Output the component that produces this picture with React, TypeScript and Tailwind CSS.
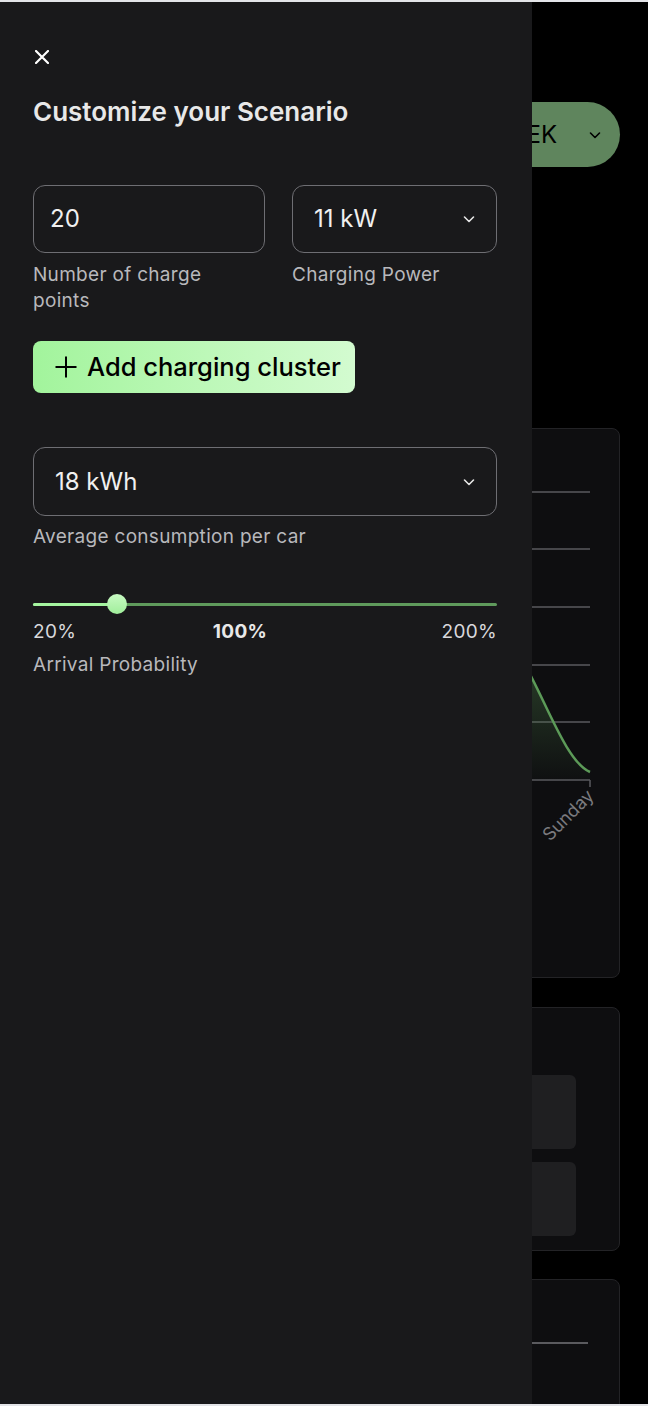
import React from "react";

function Chevron({ className = "" }: { className?: string }) {
  return (
    <svg className={className} width="16" height="16" viewBox="0 0 16 16" fill="none">
      <path d="M3.5 6l4.5 4.5L12.5 6" stroke="currentColor" strokeWidth="1.6" strokeLinecap="round" strokeLinejoin="round" />
    </svg>
  );
}

function Background() {
  const lines = [63, 120, 178, 236, 293, 351];
  return (
    <div className="flex flex-col px-[28px] pt-[100px]">
      <div className="flex justify-end">
        <div className="flex h-[65px] w-[220px] items-center justify-end rounded-full bg-[#5f855d] pr-[17px] text-[24px] text-black">
          <span>THIS WEEK</span>
          <Chevron className="ml-[30px] text-black" />
        </div>
      </div>
      <div className="mt-[261px] h-[550px] rounded-lg border border-[#232326] bg-[#0e0e10]">
        <svg width="592" height="550" viewBox="0 0 592 550">
          <defs>
            <linearGradient id="area" x1="0" y1="0" x2="0" y2="1">
              <stop offset="0" stopColor="#4b7a48" stopOpacity="0.55" />
              <stop offset="1" stopColor="#4b7a48" stopOpacity="0.02" />
            </linearGradient>
          </defs>
          {lines.map((y) => (
            <line key={y} x1="20" x2="561" y1={y} y2={y} stroke="#5a5a5e" strokeWidth="1.5" />
          ))}
          <line x1="561" x2="561" y1="351" y2="358" stroke="#5a5a5e" strokeWidth="1.5" />
          <path d="M470 200 C 505 230, 530 330, 561 343 L561 351 L470 351 Z" fill="url(#area)" />
          <path d="M470 200 C 505 230, 530 330, 561 343" stroke="#5c9a58" strokeWidth="2.5" fill="none" />
          <text
            x="566"
            y="368"
            textAnchor="end"
            transform="rotate(-45 566 368)"
            fill="#7a7a7e"
            fontSize="18"
            fontFamily="Inter, sans-serif"
          >
            Sunday
          </text>
        </svg>
      </div>
      <div className="mt-[29px] flex h-[244px] flex-col items-end gap-[13px] rounded-lg border border-[#232326] bg-[#0e0e10] pr-[43px] pt-[67px]">
        <div className="h-[74px] w-[120px] rounded-md bg-[#1f1f21]" />
        <div className="h-[74px] w-[120px] rounded-md bg-[#1f1f21]" />
      </div>
      <div className="mt-[28px] h-[200px] rounded-lg border border-[#232326] bg-[#0e0e10] pt-[62px] pr-[31px]">
        <div className="ml-auto h-[1.5px] w-[400px] bg-[#5a5a5e]" />
      </div>
    </div>
  );
}

function Drawer() {
  return (
    <div className="absolute bottom-0 left-0 top-0 w-[532px] bg-[#19191b] pl-[33px] pr-[35px] text-[#e6e6e6]">
      <div className="pl-[2px] pt-[48px]">
        <svg width="14" height="14" viewBox="0 0 14 14" fill="none">
          <path d="M1 1L13 13M13 1L1 13" stroke="#ffffff" strokeWidth="2.2" strokeLinecap="round" />
        </svg>
      </div>
      <h1 className="mt-[31px] text-[26px] font-semibold leading-[34px] text-[#e8e8e8]">Customize your Scenario</h1>

      <div className="mt-[56px] flex gap-[27px]">
        <div className="flex w-[232px] flex-col">
          <div className="flex h-[68px] items-center rounded-xl border border-[#6e6e73] px-[16px] text-[24px] text-[#f0f0f0]">
            20
          </div>
          <div className="mt-[9px] w-[200px] text-[19px] leading-[26px] tracking-[0.3px] text-[#b8b8bc]">Number of charge points</div>
        </div>
        <div className="flex w-[205px] flex-col">
          <div className="flex h-[68px] items-center justify-between rounded-xl border border-[#6e6e73] pl-[21px] pr-[19px] text-[24px] text-[#f0f0f0]">
            <span>11 kW</span>
            <Chevron className="text-[#e6e6e6]" />
          </div>
          <div className="mt-[9px] text-[19px] leading-[26px] tracking-[0.3px] text-[#b8b8bc]">Charging Power</div>
        </div>
      </div>

      <button className="mt-[27px] flex h-[52px] w-[322px] items-center gap-[9px] rounded-lg bg-gradient-to-r from-[#a2f49c] to-[#d3fbd0] pl-[21px] text-[25.5px] font-medium text-black">
        <svg width="24" height="24" viewBox="0 0 24 24" fill="none">
          <path d="M12 1.5V22.5M1.5 12H22.5" stroke="#000" strokeWidth="2" />
        </svg>
        <span>Add charging cluster</span>
      </button>

      <div className="mt-[54px] flex h-[69px] items-center justify-between rounded-xl border border-[#6e6e73] pl-[21px] pr-[19px] text-[24px] text-[#f0f0f0]">
        <span>18 kWh</span>
        <Chevron className="text-[#e6e6e6]" />
      </div>
      <div className="mt-[8px] text-[19px] leading-[26px] tracking-[0.3px] text-[#b8b8bc]">Average consumption per car</div>

      <div className="relative mt-[44px] h-[20px]">
        <div className="absolute left-0 right-0 top-[8.5px] h-[3px] rounded-full bg-[#5f9a5c]" />
        <div className="absolute left-0 top-[8.5px] h-[3px] w-[84px] rounded-full bg-[#a5f5a0]" />
        <div className="absolute left-[74px] top-0 h-[20px] w-[20px] rounded-full bg-gradient-to-b from-[#c7fac2] to-[#a0ee9b]" />
      </div>
      <div className="relative mt-[5px] flex justify-between text-[19px] leading-[26px] tracking-[0.3px] text-[#d8d8dc]">
        <span>20%</span>
        <span className="absolute left-[44.6%] top-0 -translate-x-1/2 font-bold text-[#e8e8e8]">100%</span>
        <span>200%</span>
      </div>
      <div className="mt-[7px] text-[19px] leading-[26px] tracking-[0.3px] text-[#b8b8bc]">Arrival Probability</div>
    </div>
  );
}

export default function App() {
  return (
    <div
      className="box-border h-[1406px] w-[648px] overflow-hidden border-y-2 border-[#e3e4e8] bg-black"
      style={{ fontFamily: "Inter, 'Noto Sans', sans-serif" }}
    >
      <div className="relative h-full w-full overflow-hidden">
        <Background />
        <Drawer />
      </div>
    </div>
  );
}
